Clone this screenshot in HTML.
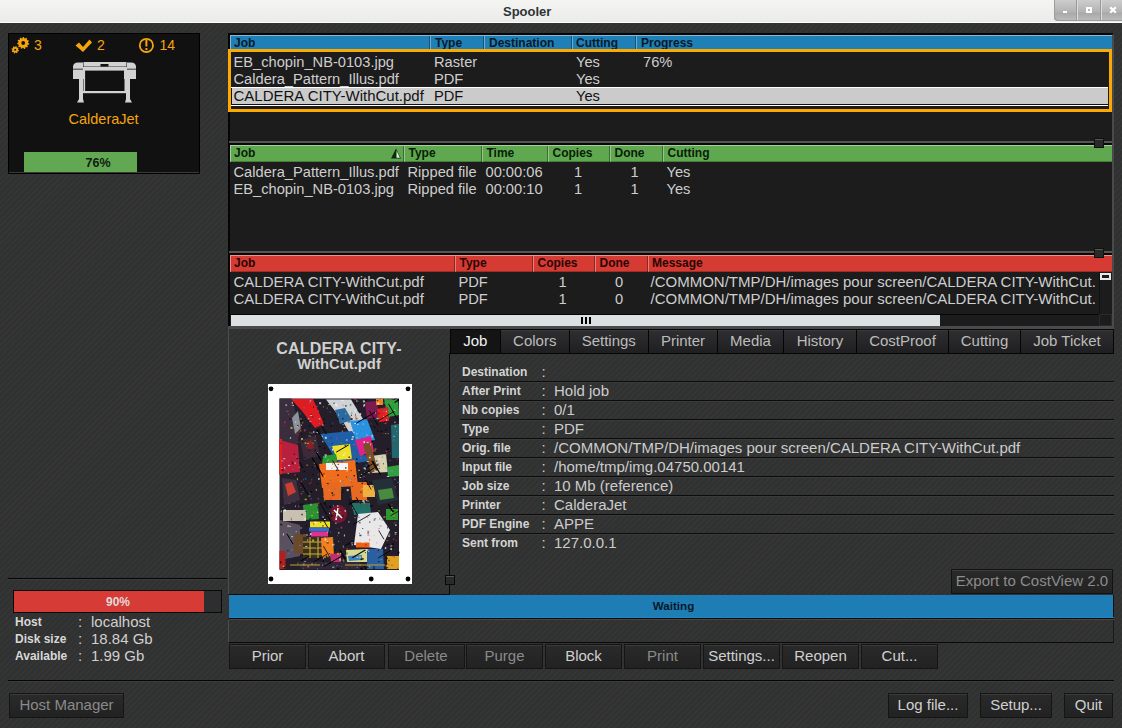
<!DOCTYPE html>
<html><head><meta charset="utf-8">
<style>
*{margin:0;padding:0;box-sizing:border-box}
html,body{width:1122px;height:728px;overflow:hidden}
body{position:relative;font-family:"Liberation Sans",sans-serif;font-size:15px;color:#cecece;
background:#323232;}
.a{position:absolute}
.t{position:absolute;white-space:nowrap;line-height:1}
.bg{background:repeating-linear-gradient(135deg,#353535 0px,#353535 1.6px,#303131 1.6px,#303131 4.2px)}
#title{left:0;top:0;width:1122px;height:23px;background:linear-gradient(#f4f4f3,#ebebea);border-bottom:1px solid #fdfdfd}
#wbtn{right:0;top:0;width:68px;height:20.5px;background:linear-gradient(#cdcdcd,#b4b4b4 55%,#a9a9a9 62%,#bdbdbd);border-bottom-left-radius:4px;box-shadow:inset 1px -1px #9c9c9c}
.hdr{position:absolute;height:17px;font-weight:bold;font-size:12px}
.hcol{position:absolute;top:0;height:17px;border-left:1px solid rgba(0,0,0,.35);box-shadow:inset 1px 0 rgba(255,255,255,.35);padding-left:4px;line-height:1}
.row{position:absolute;left:0;height:17px;white-space:nowrap}
.row span{position:absolute;top:0;line-height:1}
.btn{position:absolute;height:25px;border:1px solid #151515;background:linear-gradient(#2a2a2a,#222);box-shadow:inset 0 1px #3a3a3a;color:#d0d0d0;text-align:center;line-height:1}
.btn span{position:absolute;left:0;right:0;top:2.8px}
.dis{color:#8a8a8a}
.tab{position:absolute;top:0;height:24px;background:linear-gradient(#2e2e30,#1f1f21);color:#bdbdbd;text-align:center;border-right:2px solid #050505}
.tab span{position:absolute;left:0;right:0;top:6px;line-height:1}
.drow{position:absolute;left:460px;width:654px;height:19px}
.dl{position:absolute;left:2px;top:5px;font-weight:bold;font-size:12px;color:#d4d4d4;line-height:1}
.dc{position:absolute;left:82px;top:4px;line-height:1}
.dv{position:absolute;left:94px;top:4px;line-height:1}
.dline{position:absolute;left:460px;width:654px;height:2px;border-top:1px solid #0e0e0e;border-bottom:1px solid #3a3a3a}
</style></head><body>
<div class="a bg" style="left:0;top:23px;width:1122px;height:705px"></div>
<!-- title bar -->
<div id="title" class="a"><div class="t" style="left:503px;top:5px;font-weight:bold;font-size:13px;color:#2e3436">Spooler</div></div>
<div id="wbtn" class="a"></div>
<div class="a" style="left:1076px;top:0;width:1px;height:20px;background:#9a9a9a"></div><div class="a" style="left:1077px;top:0;width:1px;height:20px;background:#dcdcdc"></div>
<div class="a" style="left:1100px;top:0;width:1px;height:20px;background:#9a9a9a"></div><div class="a" style="left:1101px;top:0;width:1px;height:20px;background:#dcdcdc"></div>
<div class="a" style="left:1063px;top:11.2px;width:4px;height:2.2px;background:#fff"></div>
<div class="a" style="left:1086px;top:7px;width:6px;height:6px;border:2px solid #fff"></div>
<svg class="a" style="left:1109px;top:6px" width="8" height="8"><path d="M1.2 1.2 L6.8 6.8 M6.8 1.2 L1.2 6.8" stroke="#fff" stroke-width="2.2"/></svg>


<!-- printer box -->
<div class="a" style="left:8px;top:33px;width:192px;height:141px;background:#111;border:1px solid #000;box-shadow:inset 0 -1px #3a3a3a"></div>
<svg class="a" style="left:8px;top:33px" width="192" height="141" viewBox="8 33 192 141">
 <path fill="#f5a50c" fill-rule="evenodd" d="M28.10 43.00 L29.18 43.51 L28.96 44.69 L27.77 44.78 L27.32 45.65 L27.95 46.66 L27.13 47.53 L26.08 46.96 L25.24 47.46 L25.22 48.65 L24.05 48.94 L23.48 47.89 L22.50 47.85 L21.84 48.84 L20.71 48.46 L20.79 47.27 L19.99 46.70 L18.90 47.18 L18.15 46.24 L18.87 45.29 L18.50 44.38 L17.32 44.19 L17.20 43.00 L18.32 42.58 L18.50 41.62 L17.61 40.82 L18.15 39.76 L19.32 40.01 L19.99 39.30 L19.67 38.15 L20.71 37.54 L21.55 38.38 L22.50 38.15 L22.86 37.01 L24.05 37.06 L24.31 38.23 L25.24 38.54 L26.15 37.78 L27.13 38.47 L26.71 39.59 L27.32 40.35 L28.51 40.20 L28.96 41.31 L28.00 42.03 Z M25.10 43.00 A1.9 1.9 0 1 0 21.30 43.00 A1.9 1.9 0 1 0 25.10 43.00 Z"/>
 <path fill="#f5a50c" fill-rule="evenodd" d="M18.10 49.80 L18.97 50.25 L18.71 51.25 L17.73 51.22 L17.25 51.85 L17.55 52.78 L16.65 53.31 L15.99 52.59 L15.20 52.70 L14.75 53.57 L13.75 53.31 L13.78 52.33 L13.15 51.85 L12.22 52.15 L11.69 51.25 L12.41 50.59 L12.30 49.80 L11.43 49.35 L11.69 48.35 L12.67 48.38 L13.15 47.75 L12.85 46.82 L13.75 46.29 L14.41 47.01 L15.20 46.90 L15.65 46.03 L16.65 46.29 L16.62 47.27 L17.25 47.75 L18.18 47.45 L18.71 48.35 L17.99 49.01 Z M16.20 49.80 A1.0 1.0 0 1 0 14.20 49.80 A1.0 1.0 0 1 0 16.20 49.80 Z"/>
 <path d="M75.5 45.5 L79 42.5 L83 47 L89.5 39.5 L92 42.5 L83 52 Z" fill="#f5a50c"/>
 <circle cx="146.4" cy="45.4" r="6.6" fill="none" stroke="#f5a50c" stroke-width="1.8"/>
 <rect x="145.4" y="40" width="2" height="6.5" fill="#f5a50c"/>
 <rect x="145.4" y="48" width="2" height="2" fill="#f5a50c"/>
 <!-- printer -->
 <g fill="#d2d2d2">
  <path d="M73 79 L73 67 Q73 62.5 78 62.5 L83 62.5 L83 69 L85 70.5 L85 79 Z"/>
  <path d="M136 79 L136 67 Q136 62.5 131 62.5 L127 62.5 L127 69 L124 70.5 L124 79 Z"/>
  <rect x="83.5" y="62" width="43" height="4.6"/>
  <rect x="83" y="67" width="44" height="3.6"/>
  <rect x="83.5" y="70" width="1.6" height="22"/>
  <rect x="124.5" y="70" width="1.6" height="22"/>
  <rect x="83" y="91" width="44" height="2.2"/>
  <path d="M79 79 L83 79 L83 99 L84 102.5 L77 102.5 L79 99 Z"/>
  <path d="M126 79 L130 79 L130 99 L132 102.5 L125 102.5 L126 99 Z"/>
 </g>
 <rect x="100.5" y="64" width="8" height="2.6" fill="#111"/>
 <rect x="73" y="68.6" width="10" height="1.2" fill="#555"/>
 <rect x="127" y="68.6" width="9" height="1.2" fill="#555"/>
</svg>
<div class="t" style="left:34px;top:38px;font-size:14px;color:#f5a50c">3</div>
<div class="t" style="left:97px;top:38px;font-size:14px;color:#f5a50c">2</div>
<div class="t" style="left:159.5px;top:38px;font-size:14px;color:#f5a50c">14</div>
<div class="t" style="left:68.5px;top:112px;font-size:14.5px;color:#f5a50c">CalderaJet</div>
<div class="a" style="left:24px;top:152px;width:113px;height:20px;background:#62a852"></div>
<div class="t" style="left:85.5px;top:156.5px;font-size:12.5px;font-weight:bold;color:#102010">76%</div>

<!-- tables frame -->
<div class="a" style="left:228px;top:33px;width:886px;height:293px;background:#1c1c1c;border-left:2px solid #050505;border-top:2px solid #050505;border-right:2px solid #4a4a4a"></div>
<div class="a" style="left:229px;top:141px;width:883px;height:2px;background:#555"></div>
<div class="a" style="left:230px;top:143px;width:882px;height:2px;background:#080808"></div>
<div class="a" style="left:229px;top:251px;width:883px;height:2px;background:#555"></div>
<div class="a" style="left:230px;top:253px;width:882px;height:2px;background:#080808"></div>
<div class="a" style="left:230px;top:35px;width:882px;height:17px;background:#1f80b8;box-shadow:inset 1px 1px rgba(255,255,255,.45), inset 0 -1px rgba(0,0,0,.25)"></div>
<div class="t" style="left:234px;top:36.6px;font-size:12px;font-weight:bold;color:#061a2a">Job</div>
<div class="a" style="left:429px;top:36px;width:1px;height:16px;background:rgba(0,0,0,.35)"></div><div class="a" style="left:430px;top:36px;width:1px;height:16px;background:rgba(255,255,255,.35)"></div>
<div class="t" style="left:435px;top:36.6px;font-size:12px;font-weight:bold;color:#061a2a">Type</div>
<div class="a" style="left:483px;top:36px;width:1px;height:16px;background:rgba(0,0,0,.35)"></div><div class="a" style="left:484px;top:36px;width:1px;height:16px;background:rgba(255,255,255,.35)"></div>
<div class="t" style="left:489px;top:36.6px;font-size:12px;font-weight:bold;color:#061a2a">Destination</div>
<div class="a" style="left:571px;top:36px;width:1px;height:16px;background:rgba(0,0,0,.35)"></div><div class="a" style="left:572px;top:36px;width:1px;height:16px;background:rgba(255,255,255,.35)"></div>
<div class="t" style="left:576px;top:36.6px;font-size:12px;font-weight:bold;color:#061a2a">Cutting</div>
<div class="a" style="left:635px;top:36px;width:1px;height:16px;background:rgba(0,0,0,.35)"></div><div class="a" style="left:636px;top:36px;width:1px;height:16px;background:rgba(255,255,255,.35)"></div>
<div class="t" style="left:641px;top:36.6px;font-size:12px;font-weight:bold;color:#061a2a">Progress</div>

<div class="a" style="left:231px;top:87px;width:877px;height:1px;background:#fff"></div>
<div class="a" style="left:231px;top:88px;width:877px;height:16px;background:#cbcbcb;border-left:1px solid #111"></div>
<div class="a" style="left:231px;top:104px;width:877px;height:1px;background:#111"></div>
<div class="a" style="left:231px;top:105px;width:877px;height:1px;background:#fff"></div>
<div class="a" style="left:228px;top:49px;width:884px;height:63px;border:3px solid #fca900;border-top-width:3px"></div>
<div class="t" style="left:233.5px;top:55.48px;font-size:14.67px;color:#cecece">EB_chopin_NB-0103.jpg</div>
<div class="t" style="left:434px;top:55.48px;font-size:14.67px;color:#cecece">Raster</div>
<div class="t" style="left:576px;top:55.48px;font-size:14.67px;color:#cecece">Yes</div>
<div class="t" style="left:643px;top:55.48px;font-size:14.67px;color:#cecece">76%</div>
<div class="t" style="left:233.5px;top:72.38px;font-size:14.67px;color:#cecece">Caldera_Pattern_Illus.pdf</div>
<div class="t" style="left:434px;top:72.38px;font-size:14.67px;color:#cecece">PDF</div>
<div class="t" style="left:576px;top:72.38px;font-size:14.67px;color:#cecece">Yes</div>
<div class="t" style="left:233.5px;top:87.98px;font-size:15px;color:#111">CALDERA CITY-WithCut.pdf</div>
<div class="t" style="left:434px;top:89.28px;font-size:14.67px;color:#111">PDF</div>
<div class="t" style="left:576px;top:89.28px;font-size:14.67px;color:#111">Yes</div>
<div class="a" style="left:230px;top:145px;width:882px;height:17px;background:#60a850;box-shadow:inset 1px 1px rgba(255,255,255,.45), inset 0 -1px rgba(0,0,0,.25)"></div>
<div class="t" style="left:234px;top:146.6px;font-size:12px;font-weight:bold;color:#082008">Job</div>
<div class="a" style="left:403px;top:146px;width:1px;height:16px;background:rgba(0,0,0,.35)"></div><div class="a" style="left:404px;top:146px;width:1px;height:16px;background:rgba(255,255,255,.35)"></div>
<div class="t" style="left:408.5px;top:146.6px;font-size:12px;font-weight:bold;color:#082008">Type</div>
<div class="a" style="left:481px;top:146px;width:1px;height:16px;background:rgba(0,0,0,.35)"></div><div class="a" style="left:482px;top:146px;width:1px;height:16px;background:rgba(255,255,255,.35)"></div>
<div class="t" style="left:486.5px;top:146.6px;font-size:12px;font-weight:bold;color:#082008">Time</div>
<div class="a" style="left:547px;top:146px;width:1px;height:16px;background:rgba(0,0,0,.35)"></div><div class="a" style="left:548px;top:146px;width:1px;height:16px;background:rgba(255,255,255,.35)"></div>
<div class="t" style="left:552.5px;top:146.6px;font-size:12px;font-weight:bold;color:#082008">Copies</div>
<div class="a" style="left:609px;top:146px;width:1px;height:16px;background:rgba(0,0,0,.35)"></div><div class="a" style="left:610px;top:146px;width:1px;height:16px;background:rgba(255,255,255,.35)"></div>
<div class="t" style="left:614.5px;top:146.6px;font-size:12px;font-weight:bold;color:#082008">Done</div>
<div class="a" style="left:662px;top:146px;width:1px;height:16px;background:rgba(0,0,0,.35)"></div><div class="a" style="left:663px;top:146px;width:1px;height:16px;background:rgba(255,255,255,.35)"></div>
<div class="t" style="left:667.5px;top:146.6px;font-size:12px;font-weight:bold;color:#082008">Cutting</div>
<svg class="a" style="left:390px;top:148px" width="12" height="11"><path d="M6 0.5 L11 10.5 L1 10.5 Z" fill="#0a2a0a"/><path d="M6.5 2.5 L10 9.8 L6.5 9.8Z" fill="#d8f0d0"/></svg>
<div class="t" style="left:233.5px;top:165.08px;font-size:14.67px;color:#cecece">Caldera_Pattern_Illus.pdf</div>
<div class="t" style="left:407.5px;top:165.08px;font-size:14.67px;color:#cecece">Ripped file</div>
<div class="t" style="left:485.5px;top:165.08px;font-size:14.67px;color:#cecece">00:00:06</div>
<div class="t" style="left:574px;top:165.08px;font-size:14.67px;color:#cecece">1</div>
<div class="t" style="left:630.5px;top:165.08px;font-size:14.67px;color:#cecece">1</div>
<div class="t" style="left:666.5px;top:165.08px;font-size:14.67px;color:#cecece">Yes</div>
<div class="t" style="left:233.5px;top:182.18px;font-size:14.67px;color:#cecece">EB_chopin_NB-0103.jpg</div>
<div class="t" style="left:407.5px;top:182.18px;font-size:14.67px;color:#cecece">Ripped file</div>
<div class="t" style="left:485.5px;top:182.18px;font-size:14.67px;color:#cecece">00:00:10</div>
<div class="t" style="left:574px;top:182.18px;font-size:14.67px;color:#cecece">1</div>
<div class="t" style="left:630.5px;top:182.18px;font-size:14.67px;color:#cecece">1</div>
<div class="t" style="left:666.5px;top:182.18px;font-size:14.67px;color:#cecece">Yes</div>
<div class="a" style="left:230px;top:255px;width:882px;height:17px;background:#d63b33;box-shadow:inset 1px 1px rgba(255,255,255,.45), inset 0 -1px rgba(0,0,0,.25)"></div>
<div class="t" style="left:234px;top:256.6px;font-size:12px;font-weight:bold;color:#2a0505">Job</div>
<div class="a" style="left:454px;top:256px;width:1px;height:16px;background:rgba(0,0,0,.35)"></div><div class="a" style="left:455px;top:256px;width:1px;height:16px;background:rgba(255,255,255,.35)"></div>
<div class="t" style="left:459.5px;top:256.6px;font-size:12px;font-weight:bold;color:#2a0505">Type</div>
<div class="a" style="left:532px;top:256px;width:1px;height:16px;background:rgba(0,0,0,.35)"></div><div class="a" style="left:533px;top:256px;width:1px;height:16px;background:rgba(255,255,255,.35)"></div>
<div class="t" style="left:537.5px;top:256.6px;font-size:12px;font-weight:bold;color:#2a0505">Copies</div>
<div class="a" style="left:594px;top:256px;width:1px;height:16px;background:rgba(0,0,0,.35)"></div><div class="a" style="left:595px;top:256px;width:1px;height:16px;background:rgba(255,255,255,.35)"></div>
<div class="t" style="left:599.5px;top:256.6px;font-size:12px;font-weight:bold;color:#2a0505">Done</div>
<div class="a" style="left:647px;top:256px;width:1px;height:16px;background:rgba(0,0,0,.35)"></div><div class="a" style="left:648px;top:256px;width:1px;height:16px;background:rgba(255,255,255,.35)"></div>
<div class="t" style="left:652px;top:256.6px;font-size:12px;font-weight:bold;color:#2a0505">Message</div>
<div class="t" style="left:233.5px;top:274.08px;font-size:15px;color:#cecece">CALDERA CITY-WithCut.pdf</div>
<div class="t" style="left:458.5px;top:275.38px;font-size:14.67px;color:#cecece">PDF</div>
<div class="t" style="left:558.5px;top:275.38px;font-size:14.67px;color:#cecece">1</div>
<div class="t" style="left:615px;top:275.38px;font-size:14.67px;color:#cecece">0</div>
<div class="t" style="left:650.5px;top:274.08px;font-size:15px;color:#cecece">/COMMON/TMP/DH/images pour screen/CALDERA CITY-WithCut.</div>
<div class="t" style="left:233.5px;top:290.78px;font-size:15px;color:#cecece">CALDERA CITY-WithCut.pdf</div>
<div class="t" style="left:458.5px;top:292.08px;font-size:14.67px;color:#cecece">PDF</div>
<div class="t" style="left:558.5px;top:292.08px;font-size:14.67px;color:#cecece">1</div>
<div class="t" style="left:615px;top:292.08px;font-size:14.67px;color:#cecece">0</div>
<div class="t" style="left:650.5px;top:290.78px;font-size:15px;color:#cecece">/COMMON/TMP/DH/images pour screen/CALDERA CITY-WithCut.</div>

<div class="a" style="left:1099px;top:272px;width:13px;height:42px;background:#1c1c1c;border-left:1px solid #111"></div>
<div class="a" style="left:1100px;top:273px;width:11px;height:7px;border:2px solid #e8e8e8;border-top-width:2px;background:#1c1c1c"></div>
<div class="a" style="left:230px;top:314px;width:870px;height:1px;background:#060606"></div>
<div class="a" style="left:231px;top:315px;width:709px;height:11px;background:#dde0e2"></div>
<div class="a" style="left:581px;top:317px;width:2px;height:7px;background:#000"></div>
<div class="a" style="left:585px;top:317px;width:2px;height:7px;background:#000"></div>
<div class="a" style="left:589px;top:317px;width:2px;height:7px;background:#000"></div>
<div class="a" style="left:1099px;top:314px;width:13px;height:12px;background:#1c1c1c;border:1px solid #2a2a2a"></div>
<div class="a" style="left:228px;top:326px;width:886px;height:3px;background:#4a4a4a"></div>
<div class="a" style="left:1094px;top:138px;width:10px;height:10px;background:#2a2a2a;border:1px solid #111;box-shadow:inset 0 1px #555"></div>
<div class="a" style="left:1094px;top:248px;width:10px;height:10px;background:#2a2a2a;border:1px solid #111;box-shadow:inset 0 1px #555"></div>

<!-- preview panel -->
<div class="a" style="left:228px;top:329px;width:222px;height:266px;border-left:1px solid #4c4c4c;border-bottom:1px solid #0a0a0a"></div>
<div class="t" style="left:228px;width:222px;text-align:center;top:340.5px;font-size:16px;font-weight:bold;color:#d0d0d0;letter-spacing:0.2px">CALDERA CITY-</div>
<div class="t" style="left:228px;width:222px;text-align:center;top:356.5px;font-size:14.8px;font-weight:bold;color:#d0d0d0">WithCut.pdf</div>
<div class="a" style="left:268px;top:384px;width:143.5px;height:200px;background:#fff"></div>
<svg class="a" style="left:268px;top:384px" width="144" height="200" viewBox="268 384 144 200">
 <g fill="#000">
 <circle cx="271" cy="388.8" r="2.4"/><circle cx="408" cy="388.8" r="2.4"/>
 <circle cx="271" cy="579" r="2.4"/><circle cx="371.2" cy="579" r="2.4"/><circle cx="408" cy="579" r="2.4"/>
 </g>
 <g>
 <defs><clipPath id="imgclip"><rect x="279.5" y="398.5" width="119.5" height="171.5"/></clipPath></defs><rect x="279.5" y="398.5" width="119.5" height="171.5" fill="#241e2a"/>
 <polygon points="279.5,398.5 292,398.5 300,430 292,470 279.5,475" fill="#3a2e3e"/>
 <polygon points="291,399 313,399 324,424 315,428 302,411" fill="#e01c22"/>
 <polygon points="292,418 298,411 301,428 295,434" fill="#8c939b"/>
 <polygon points="326,399.5 351,399.5 371,432 352,437 342,420" fill="#cfd2d6"/>
 <polygon points="335,410 345,408 352,420 340,424" fill="#2a6aa0"/>
 <polygon points="320,434 352,431 374,460 340,466" fill="#1f5fa8"/>
 <polygon points="350,421 367,419 375,440 357,444" fill="#2a92e2"/>
 <polygon points="355,440 371,436 374,452 360,456" fill="#e1218a"/>
 <polygon points="332,446 350,444 352,459 337,460" fill="#efe02a"/>
 <polygon points="323,456 336,454 338,463 322,465" fill="#2a9a30"/>
 <polygon points="319,464 355,460 358,486 322,488" fill="#f06d1e"/>
 <rect x="326" y="463" width="22" height="7" fill="#f4f4f4"/>
 <polygon points="279.5,440 298,445 300,472 279.5,474" fill="#b8203e"/>
 <rect x="279.5" y="439" width="2.5" height="35" fill="#e52020"/>
 <polygon points="384,399 398,400 399,415 388,417" fill="#2f9f3e"/>
 <polygon points="365,402 377,401 379,417 367,419" fill="#7d1a4f"/>
 <polygon points="377,409 388,407 389,421 379,422" fill="#e02020"/>
 <rect x="376" y="399" width="7" height="6" fill="#f08020"/>
 <polygon points="391,425 399,424 399,458 392,458" fill="#206870"/>
 <polygon points="371,456 386,454 388,472 372,473" fill="#d8d0b0"/>
 <polygon points="387,467 399,465 399,476 388,477" fill="#30a040"/>
 <polygon points="363,444 370,442 378,470 371,473" fill="#7a5028"/>
 <polygon points="300,440 316,436 320,456 304,460" fill="#3a2a3a"/>
 <polygon points="306,442 312,440 314,448 308,450" fill="#8a2020"/>
 <polygon points="322.5,482 341,482 341,500 324,500" fill="#e86a20"/>
 <polygon points="350,482 367,482 367,500 352,500" fill="#e86a20"/>
 <rect x="363" y="485" width="12" height="12" fill="#f0b040"/>
 <polygon points="303,505 318,503 319,519 304,520" fill="#2a9030"/>
 <ellipse cx="338.5" cy="514" rx="8.5" ry="9" fill="#7a1530"/>
 <path d="M334 510 L342 518 M338 508 L336 520" stroke="#fff" stroke-width="1.5"/>
 <polygon points="352,503 370,503 371,515 354,515" fill="#207068"/>
 <polygon points="386,509 398,509 398,520 386,520" fill="#2a9a30"/>
 <polygon points="358,514 378,512 390,530 381,549 354,545" fill="#e8e8ea"/>
 <rect x="310" y="521.5" width="20" height="6" fill="#f0e020"/>
 <rect x="309" y="527.5" width="20" height="4" fill="#3070d0"/>
 <rect x="311" y="531.5" width="17" height="5" fill="#e03090"/>
 <polygon points="280,520 300,525 300,556 280,560" fill="#5a5060"/>
 <polygon points="283,510 306,510 306,521 283,521" fill="#c8c0b0"/>
 <polygon points="294,534 306,534 306,554 294,554" fill="#6a4a2a"/>
 <rect x="303" y="537" width="29" height="21" fill="#3a3020"/>
 <path d="M303 542 H332 M303 548 H332 M303 554 H332 M310 537 V558 M318 537 V558 M325 537 V558" stroke="#d0b030" stroke-width="1"/>
 <polygon points="321,538 333,537 334,556 322,557" fill="#f08020"/>
 <polygon points="330,554 341,553 341,562 331,562" fill="#c03070"/>
 <rect x="356" y="542.5" width="13.5" height="5" fill="#f06010"/>
 <polygon points="346,550 367,549 367,562 347,562" fill="#d8d890"/>
 <polygon points="348,556 362,555 362,560 349,561" fill="#3a80c0"/>
 <polygon points="367,549 383,549 384,569 367,569" fill="#2a60a0"/>
 <polygon points="387,556 399,556 399,569 387,569" fill="#e0a020"/>
 <rect x="279.5" y="551" width="6" height="18" fill="#b02020"/>
 <rect x="300" y="562" width="60" height="7" fill="#302838"/>
 <g opacity="0.7"><rect x="332.9" y="493.7" width="2" height="2" fill="#6a4a2a"/><rect x="380.4" y="430.8" width="2" height="1" fill="#000"/><rect x="332.2" y="422.6" width="1" height="2" fill="#2060b0"/><rect x="356.7" y="503.1" width="1" height="1" fill="#6a4a2a"/><rect x="287.0" y="404.6" width="1" height="1" fill="#2060b0"/><rect x="318.0" y="499.0" width="1" height="1" fill="#777"/><rect x="338.5" y="511.1" width="2" height="1.5" fill="#2a9030"/><rect x="397.2" y="567.8" width="1" height="1.5" fill="#d02020"/><rect x="368.9" y="485.7" width="1" height="1" fill="#000"/><rect x="326.7" y="542.4" width="2" height="1" fill="#000"/><rect x="379.5" y="398.6" width="1" height="1" fill="#e03090"/><rect x="323.8" y="519.0" width="2" height="1" fill="#fff"/><rect x="371.4" y="444.4" width="1" height="1.5" fill="#d02020"/><rect x="281.3" y="468.2" width="1" height="1" fill="#fff"/><rect x="362.9" y="400.4" width="2" height="2" fill="#fff"/><rect x="360.0" y="430.5" width="1" height="1" fill="#2a9030"/><rect x="355.5" y="418.3" width="2" height="1" fill="#000"/><rect x="311.3" y="563.6" width="1.5" height="1" fill="#fff"/><rect x="301.6" y="567.8" width="1" height="1" fill="#000"/><rect x="304.7" y="442.4" width="1.5" height="1.5" fill="#f0e020"/><rect x="288.2" y="413.8" width="1" height="1" fill="#f07020"/><rect x="323.4" y="475.5" width="2" height="1" fill="#f0e020"/><rect x="301.1" y="424.7" width="1" height="1" fill="#fff"/><rect x="298.2" y="505.4" width="1" height="2" fill="#e03090"/><rect x="350.7" y="470.1" width="1" height="1" fill="#000"/><rect x="340.0" y="441.9" width="2" height="1.5" fill="#2a9030"/><rect x="376.7" y="499.9" width="1.5" height="1" fill="#000"/><rect x="294.4" y="480.0" width="1" height="1.5" fill="#fff"/><rect x="387.7" y="433.2" width="1" height="1" fill="#bbb"/><rect x="328.0" y="440.8" width="1" height="1" fill="#777"/><rect x="323.0" y="495.8" width="1" height="1" fill="#f07020"/><rect x="295.8" y="475.1" width="1.5" height="1" fill="#000"/><rect x="388.5" y="479.2" width="1.5" height="1.5" fill="#000"/><rect x="282.0" y="506.7" width="2" height="1" fill="#777"/><rect x="317.1" y="568.4" width="1" height="2" fill="#20a0e0"/><rect x="322.9" y="406.1" width="1" height="1.5" fill="#f07020"/><rect x="289.5" y="479.0" width="1" height="2" fill="#000"/><rect x="381.4" y="495.9" width="2" height="2" fill="#000"/><rect x="351.3" y="412.1" width="1" height="1.5" fill="#2a9030"/><rect x="365.4" y="464.5" width="2" height="2" fill="#2060b0"/><rect x="378.4" y="412.7" width="1" height="1.5" fill="#000"/><rect x="336.3" y="437.6" width="1" height="2" fill="#e03090"/><rect x="309.7" y="400.4" width="1.5" height="1" fill="#fff"/><rect x="340.7" y="526.6" width="1.5" height="2" fill="#e03090"/><rect x="384.7" y="454.1" width="1.5" height="1" fill="#2a9030"/><rect x="374.3" y="526.8" width="1" height="1" fill="#f0e020"/><rect x="305.4" y="555.0" width="1" height="1" fill="#000"/><rect x="338.1" y="540.8" width="1" height="1" fill="#bbb"/><rect x="376.5" y="417.7" width="2" height="1.5" fill="#fff"/><rect x="377.5" y="463.5" width="2" height="1.5" fill="#2060b0"/><rect x="317.3" y="539.4" width="1.5" height="1" fill="#bbb"/><rect x="346.8" y="451.0" width="1" height="1" fill="#f0e020"/><rect x="333.2" y="402.7" width="1.5" height="1" fill="#000"/><rect x="373.5" y="565.8" width="1" height="2" fill="#000"/><rect x="353.8" y="509.9" width="1.5" height="1" fill="#fff"/><rect x="303.0" y="479.3" width="1" height="1" fill="#e03090"/><rect x="342.6" y="404.6" width="1" height="1.5" fill="#f07020"/><rect x="343.2" y="559.5" width="1" height="2" fill="#fff"/><rect x="289.8" y="557.0" width="2" height="1" fill="#2060b0"/><rect x="333.0" y="504.8" width="1" height="2" fill="#20a0e0"/><rect x="346.6" y="548.0" width="1.5" height="2" fill="#d02020"/><rect x="356.4" y="433.3" width="1" height="1" fill="#fff"/><rect x="385.7" y="565.2" width="1.5" height="1.5" fill="#bbb"/><rect x="386.9" y="544.0" width="1.5" height="1" fill="#000"/><rect x="331.5" y="492.1" width="1.5" height="2" fill="#000"/><rect x="305.3" y="546.0" width="2" height="1" fill="#fff"/><rect x="342.4" y="515.2" width="1" height="2" fill="#000"/><rect x="397.5" y="551.6" width="2" height="2" fill="#000"/><rect x="368.9" y="473.2" width="1.5" height="1" fill="#6a4a2a"/><rect x="340.2" y="552.7" width="1.5" height="1.5" fill="#f0e020"/><rect x="392.2" y="546.4" width="1" height="1.5" fill="#000"/><rect x="393.8" y="487.6" width="2" height="1" fill="#2a9030"/><rect x="342.7" y="484.0" width="2" height="1" fill="#20a0e0"/><rect x="393.9" y="486.2" width="2" height="1" fill="#e03090"/><rect x="290.5" y="426.9" width="2" height="2" fill="#f0e020"/><rect x="311.3" y="478.9" width="1" height="1.5" fill="#2a9030"/><rect x="385.8" y="557.6" width="2" height="1.5" fill="#000"/><rect x="302.1" y="503.5" width="1.5" height="1" fill="#000"/><rect x="283.7" y="424.9" width="1" height="1.5" fill="#d02020"/><rect x="364.9" y="440.1" width="2" height="1" fill="#e03090"/><rect x="365.7" y="419.4" width="1.5" height="1" fill="#6a4a2a"/><rect x="383.2" y="402.5" width="2" height="1" fill="#20a0e0"/><rect x="303.6" y="505.8" width="1" height="1" fill="#20a0e0"/><rect x="351.7" y="544.1" width="1" height="1.5" fill="#fff"/><rect x="316.8" y="452.0" width="1" height="1" fill="#fff"/><rect x="384.2" y="421.3" width="1" height="1" fill="#000"/><rect x="310.1" y="415.0" width="2" height="1" fill="#fff"/><rect x="327.0" y="515.0" width="1" height="1" fill="#fff"/><rect x="346.7" y="459.3" width="1.5" height="1" fill="#6a4a2a"/><rect x="354.4" y="456.9" width="1" height="1" fill="#e03090"/><rect x="292.0" y="404.9" width="2" height="1" fill="#fff"/><rect x="301.3" y="433.2" width="1" height="1.5" fill="#000"/><rect x="347.9" y="421.4" width="2" height="1" fill="#000"/><rect x="318.1" y="477.9" width="1.5" height="2" fill="#fff"/><rect x="350.4" y="400.8" width="1" height="1" fill="#fff"/><rect x="327.6" y="459.6" width="1.5" height="2" fill="#fff"/><rect x="350.9" y="414.6" width="1" height="1.5" fill="#000"/><rect x="374.1" y="518.3" width="2" height="1" fill="#6a4a2a"/><rect x="348.5" y="456.5" width="1.5" height="1.5" fill="#000"/><rect x="367.3" y="530.8" width="2" height="1" fill="#d02020"/><rect x="383.3" y="516.6" width="2" height="1" fill="#f0e020"/><rect x="303.9" y="429.9" width="1.5" height="1.5" fill="#e03090"/><rect x="291.4" y="549.5" width="1" height="1" fill="#bbb"/><rect x="391.0" y="511.7" width="1.5" height="1" fill="#f0e020"/><rect x="346.7" y="489.1" width="2" height="2" fill="#fff"/><rect x="362.2" y="528.0" width="1" height="1" fill="#000"/><rect x="366.7" y="442.1" width="2" height="1" fill="#fff"/><rect x="356.0" y="400.3" width="1.5" height="1.5" fill="#bbb"/><rect x="386.4" y="492.0" width="2" height="1" fill="#2060b0"/><rect x="375.0" y="411.5" width="1" height="2" fill="#fff"/><rect x="325.0" y="563.4" width="2" height="1" fill="#2a9030"/><rect x="391.0" y="470.0" width="2" height="1.5" fill="#f07020"/><rect x="342.1" y="480.7" width="1.5" height="1.5" fill="#777"/><rect x="282.7" y="529.8" width="1" height="1" fill="#2a9030"/><rect x="368.5" y="464.8" width="1.5" height="2" fill="#000"/><rect x="348.1" y="521.4" width="1.5" height="1" fill="#fff"/><rect x="330.2" y="479.7" width="1" height="1" fill="#6a4a2a"/><rect x="291.1" y="536.2" width="2" height="1" fill="#fff"/><rect x="350.7" y="418.1" width="2" height="2" fill="#000"/><rect x="303.5" y="407.3" width="1" height="1" fill="#f07020"/><rect x="331.8" y="512.0" width="2" height="1.5" fill="#2a9030"/><rect x="322.5" y="525.0" width="1" height="1.5" fill="#000"/><rect x="307.6" y="417.9" width="1.5" height="1.5" fill="#bbb"/><rect x="311.5" y="515.0" width="1" height="1.5" fill="#fff"/><rect x="301.9" y="440.8" width="1" height="1" fill="#000"/><rect x="280.6" y="442.6" width="1" height="1" fill="#000"/><rect x="305.8" y="445.8" width="1" height="1" fill="#20a0e0"/><rect x="307.2" y="565.4" width="2" height="2" fill="#f07020"/><rect x="304.4" y="456.9" width="1" height="1" fill="#000"/><rect x="332.3" y="538.2" width="1" height="2" fill="#2a9030"/><rect x="367.7" y="464.8" width="1" height="1.5" fill="#000"/><rect x="356.6" y="566.7" width="1.5" height="1.5" fill="#20a0e0"/><rect x="369.1" y="538.9" width="1" height="2" fill="#f07020"/><rect x="348.0" y="477.0" width="1.5" height="1" fill="#20a0e0"/><rect x="289.3" y="494.4" width="2" height="2" fill="#777"/><rect x="376.7" y="400.1" width="1.5" height="1" fill="#000"/><rect x="361.5" y="482.6" width="1.5" height="1.5" fill="#000"/><rect x="305.3" y="510.2" width="1.5" height="1.5" fill="#000"/><rect x="317.5" y="473.5" width="1.5" height="2" fill="#6a4a2a"/><rect x="374.3" y="450.3" width="1.5" height="1" fill="#f0e020"/><rect x="393.7" y="522.6" width="1" height="1" fill="#f07020"/><rect x="377.3" y="402.6" width="2" height="2" fill="#fff"/><rect x="366.7" y="461.1" width="2" height="1" fill="#fff"/><rect x="300.3" y="527.5" width="1.5" height="1" fill="#fff"/><rect x="340.3" y="491.0" width="1.5" height="1" fill="#2a9030"/><rect x="287.1" y="491.5" width="1" height="1.5" fill="#000"/><rect x="311.8" y="416.4" width="1.5" height="1" fill="#000"/><rect x="354.3" y="423.0" width="2" height="1" fill="#fff"/><rect x="337.2" y="552.8" width="1.5" height="2" fill="#f0e020"/><rect x="320.9" y="535.7" width="1.5" height="1" fill="#e03090"/><rect x="337.1" y="535.3" width="1" height="1" fill="#2a9030"/><rect x="368.8" y="566.1" width="1.5" height="1" fill="#f0e020"/><rect x="377.9" y="549.6" width="1" height="1.5" fill="#000"/><rect x="374.2" y="470.2" width="2" height="1" fill="#fff"/><rect x="367.0" y="567.0" width="2" height="1" fill="#d02020"/><rect x="303.6" y="470.7" width="1.5" height="1.5" fill="#000"/><rect x="335.1" y="522.7" width="1.5" height="1" fill="#fff"/><rect x="387.1" y="526.5" width="1" height="2" fill="#000"/><rect x="316.4" y="432.1" width="1.5" height="1" fill="#fff"/><rect x="350.3" y="478.7" width="1" height="2" fill="#fff"/><rect x="385.1" y="466.9" width="1.5" height="2" fill="#bbb"/><rect x="336.7" y="466.9" width="1.5" height="1" fill="#e03090"/><rect x="381.3" y="466.4" width="1" height="1" fill="#f0e020"/><rect x="394.7" y="533.6" width="1.5" height="1" fill="#fff"/><rect x="384.8" y="547.1" width="1.5" height="2" fill="#fff"/><rect x="363.7" y="501.5" width="1" height="2" fill="#fff"/><rect x="370.6" y="423.1" width="1" height="1.5" fill="#6a4a2a"/><rect x="342.6" y="424.1" width="1" height="1" fill="#fff"/><rect x="376.4" y="542.4" width="1" height="1" fill="#f07020"/><rect x="311.4" y="520.3" width="1" height="2" fill="#2060b0"/><rect x="289.3" y="525.8" width="1.5" height="1" fill="#fff"/><rect x="328.7" y="554.3" width="1" height="2" fill="#fff"/><rect x="283.9" y="468.7" width="2" height="1" fill="#777"/><rect x="316.8" y="467.4" width="1.5" height="2" fill="#000"/><rect x="321.9" y="515.3" width="1" height="2" fill="#2060b0"/><rect x="367.6" y="531.9" width="1" height="2" fill="#000"/><rect x="381.4" y="519.5" width="2" height="1" fill="#777"/><rect x="346.1" y="476.4" width="1" height="1" fill="#000"/><rect x="313.8" y="462.4" width="1.5" height="1.5" fill="#f0e020"/><rect x="345.1" y="413.3" width="1" height="1" fill="#f0e020"/><rect x="365.8" y="454.5" width="1.5" height="2" fill="#d02020"/><rect x="332.2" y="463.5" width="1" height="1" fill="#000"/><rect x="295.0" y="505.7" width="1" height="1" fill="#fff"/><rect x="327.0" y="540.8" width="1" height="1" fill="#fff"/><rect x="283.3" y="566.4" width="2" height="2" fill="#000"/><rect x="319.8" y="538.5" width="1" height="1" fill="#000"/><rect x="376.4" y="464.1" width="1.5" height="2" fill="#000"/><rect x="365.3" y="502.7" width="1.5" height="1" fill="#6a4a2a"/><rect x="281.7" y="454.8" width="1.5" height="1.5" fill="#2060b0"/><rect x="292.0" y="462.7" width="1.5" height="1.5" fill="#000"/><rect x="351.6" y="425.4" width="1.5" height="1" fill="#f07020"/><rect x="351.7" y="485.8" width="1" height="1" fill="#000"/><rect x="353.5" y="432.1" width="1" height="1" fill="#fff"/><rect x="335.9" y="469.5" width="1.5" height="1.5" fill="#000"/><rect x="389.1" y="459.9" width="2" height="1" fill="#2060b0"/><rect x="394.4" y="421.6" width="1" height="1.5" fill="#fff"/><rect x="386.8" y="567.2" width="1.5" height="1" fill="#000"/><rect x="389.7" y="399.1" width="1.5" height="1" fill="#f07020"/><rect x="377.5" y="430.0" width="1" height="2" fill="#000"/><rect x="327.1" y="531.6" width="1" height="1.5" fill="#f0e020"/><rect x="352.1" y="507.4" width="1" height="1" fill="#fff"/><rect x="328.1" y="404.1" width="2" height="1" fill="#f0e020"/><rect x="300.0" y="486.9" width="1.5" height="1" fill="#d02020"/><rect x="285.8" y="531.8" width="1" height="2" fill="#e03090"/><rect x="350.3" y="478.4" width="2" height="2" fill="#777"/><rect x="336.8" y="567.6" width="2" height="2" fill="#000"/><rect x="346.3" y="552.4" width="1.5" height="2" fill="#2a9030"/><rect x="386.2" y="453.0" width="1" height="1.5" fill="#2a9030"/><rect x="365.9" y="500.1" width="1.5" height="1" fill="#fff"/><rect x="294.2" y="474.5" width="2" height="1" fill="#e03090"/><rect x="361.5" y="488.0" width="1" height="1.5" fill="#f0e020"/><rect x="390.4" y="548.1" width="1.5" height="2" fill="#fff"/><rect x="305.7" y="525.4" width="1" height="1" fill="#000"/><rect x="340.8" y="420.6" width="2" height="1" fill="#777"/><rect x="308.3" y="449.4" width="1.5" height="1" fill="#000"/><rect x="331.5" y="475.0" width="2" height="1" fill="#f07020"/><rect x="361.2" y="437.7" width="1.5" height="1" fill="#2060b0"/><rect x="385.5" y="450.8" width="2" height="1" fill="#e03090"/><rect x="383.2" y="433.0" width="1" height="1" fill="#d02020"/><rect x="378.4" y="458.7" width="2" height="1" fill="#fff"/><rect x="354.5" y="517.1" width="1" height="1" fill="#fff"/><rect x="391.5" y="564.5" width="1" height="1.5" fill="#d02020"/><rect x="392.9" y="445.1" width="2" height="1" fill="#d02020"/><rect x="361.6" y="557.9" width="2" height="2" fill="#000"/><rect x="299.5" y="545.0" width="1" height="1" fill="#bbb"/><rect x="300.9" y="438.5" width="1.5" height="1.5" fill="#f07020"/><rect x="374.3" y="487.6" width="1" height="1" fill="#777"/><rect x="385.2" y="429.2" width="1" height="1.5" fill="#000"/><rect x="355.0" y="413.8" width="1" height="2" fill="#6a4a2a"/><rect x="288.2" y="552.8" width="1" height="1.5" fill="#20a0e0"/><rect x="309.1" y="535.0" width="1" height="1" fill="#777"/><rect x="396.1" y="430.7" width="1" height="1.5" fill="#20a0e0"/><rect x="282.9" y="532.9" width="1" height="1" fill="#2060b0"/><rect x="387.6" y="497.9" width="1" height="2" fill="#000"/><rect x="300.7" y="493.0" width="1.5" height="1.5" fill="#e03090"/><rect x="371.9" y="486.3" width="1" height="1" fill="#000"/><rect x="351.3" y="438.5" width="2" height="1.5" fill="#fff"/><rect x="310.1" y="491.0" width="2" height="1.5" fill="#000"/><rect x="303.4" y="563.5" width="1" height="2" fill="#fff"/><rect x="317.9" y="501.9" width="2" height="2" fill="#6a4a2a"/><rect x="331.6" y="443.2" width="1" height="1" fill="#000"/><rect x="386.6" y="495.2" width="1" height="1" fill="#000"/><rect x="316.2" y="405.7" width="1.5" height="1.5" fill="#e03090"/><rect x="289.9" y="538.0" width="1" height="2" fill="#bbb"/><rect x="308.8" y="483.0" width="2" height="1" fill="#d02020"/><rect x="328.0" y="460.5" width="1" height="1" fill="#000"/><rect x="337.3" y="527.9" width="1" height="1" fill="#2060b0"/><rect x="341.1" y="566.1" width="1" height="1" fill="#2a9030"/><rect x="384.5" y="422.6" width="2" height="1.5" fill="#e03090"/><rect x="329.6" y="411.5" width="1" height="1" fill="#777"/><rect x="309.4" y="492.3" width="1" height="2" fill="#2060b0"/><rect x="289.6" y="437.1" width="1.5" height="1.5" fill="#fff"/><rect x="284.2" y="467.0" width="1" height="1.5" fill="#fff"/><rect x="334.1" y="465.3" width="1" height="2" fill="#f0e020"/><rect x="371.7" y="435.1" width="1.5" height="1" fill="#fff"/><rect x="373.1" y="535.2" width="2" height="1" fill="#f0e020"/><rect x="304.8" y="478.0" width="1.5" height="2" fill="#2060b0"/><rect x="337.3" y="505.0" width="1" height="2" fill="#fff"/><rect x="343.3" y="469.8" width="1" height="1.5" fill="#f07020"/><rect x="391.4" y="504.1" width="1" height="1.5" fill="#6a4a2a"/><rect x="325.9" y="555.5" width="1" height="1.5" fill="#000"/><rect x="322.1" y="424.6" width="1.5" height="1" fill="#fff"/><rect x="364.9" y="552.7" width="1" height="1.5" fill="#f0e020"/><rect x="332.6" y="543.8" width="2" height="1.5" fill="#bbb"/><rect x="370.4" y="486.8" width="1" height="1.5" fill="#f0e020"/><rect x="351.2" y="481.5" width="1" height="1" fill="#6a4a2a"/><rect x="349.8" y="403.9" width="1.5" height="2" fill="#2a9030"/><rect x="336.0" y="516.5" width="1.5" height="1.5" fill="#2060b0"/><rect x="358.1" y="423.5" width="1" height="1.5" fill="#20a0e0"/><rect x="363.6" y="467.4" width="2" height="1.5" fill="#fff"/><rect x="291.6" y="461.5" width="1" height="1" fill="#000"/><rect x="379.6" y="525.5" width="2" height="1" fill="#777"/><rect x="357.4" y="409.9" width="1" height="1.5" fill="#000"/><rect x="392.2" y="546.1" width="1" height="1.5" fill="#000"/><rect x="373.8" y="418.9" width="2" height="1" fill="#e03090"/><rect x="324.7" y="454.3" width="2" height="1.5" fill="#fff"/><rect x="298.2" y="466.9" width="2" height="1" fill="#f07020"/><rect x="358.0" y="439.3" width="1" height="1.5" fill="#2a9030"/><rect x="374.4" y="479.8" width="1.5" height="1.5" fill="#000"/><rect x="386.0" y="419.0" width="1" height="2" fill="#bbb"/><rect x="285.9" y="482.7" width="1.5" height="2" fill="#d02020"/><rect x="384.1" y="410.8" width="1" height="1.5" fill="#d02020"/><rect x="384.7" y="494.7" width="1.5" height="1" fill="#e03090"/><rect x="324.9" y="456.5" width="1.5" height="1" fill="#fff"/><rect x="370.5" y="505.1" width="2" height="2" fill="#000"/><rect x="312.1" y="539.5" width="2" height="2" fill="#f0e020"/><rect x="284.0" y="421.6" width="1.5" height="1.5" fill="#e03090"/><rect x="322.0" y="564.6" width="1" height="1" fill="#bbb"/><rect x="306.5" y="514.1" width="1" height="1" fill="#20a0e0"/><rect x="395.1" y="399.1" width="2" height="1" fill="#20a0e0"/><rect x="383.8" y="516.0" width="1.5" height="1.5" fill="#f07020"/><rect x="291.8" y="401.8" width="1" height="2" fill="#fff"/><rect x="393.2" y="538.6" width="1" height="1.5" fill="#e03090"/><rect x="374.5" y="448.4" width="2" height="1.5" fill="#f07020"/><rect x="367.9" y="489.3" width="1" height="1" fill="#f07020"/><rect x="317.8" y="428.7" width="1" height="1" fill="#000"/><rect x="376.0" y="549.1" width="1.5" height="1" fill="#2060b0"/><rect x="340.0" y="514.0" width="1" height="1" fill="#2a9030"/><rect x="382.1" y="407.6" width="1.5" height="2" fill="#6a4a2a"/><rect x="366.8" y="516.4" width="1.5" height="1.5" fill="#f07020"/><rect x="364.0" y="454.1" width="1.5" height="1" fill="#000"/><rect x="346.5" y="470.0" width="1" height="1.5" fill="#fff"/><rect x="294.3" y="462.6" width="1.5" height="1" fill="#fff"/><rect x="394.4" y="478.7" width="1" height="1.5" fill="#bbb"/><rect x="329.0" y="505.8" width="2" height="2" fill="#000"/><rect x="285.2" y="519.8" width="1" height="1" fill="#fff"/><rect x="313.3" y="522.8" width="1" height="2" fill="#d02020"/><rect x="386.3" y="540.1" width="2" height="1" fill="#f07020"/><rect x="287.5" y="473.1" width="1.5" height="1" fill="#f0e020"/><rect x="364.7" y="467.9" width="1" height="2" fill="#fff"/><rect x="343.9" y="534.5" width="1" height="2" fill="#fff"/><rect x="377.9" y="493.1" width="1.5" height="2" fill="#2a9030"/><rect x="293.7" y="453.5" width="1" height="1.5" fill="#000"/><rect x="311.8" y="466.5" width="1.5" height="1" fill="#000"/><rect x="336.4" y="460.7" width="1.5" height="1" fill="#000"/><rect x="287.1" y="550.2" width="1.5" height="1" fill="#000"/><rect x="301.0" y="480.7" width="1" height="2" fill="#e03090"/><rect x="283.3" y="458.2" width="2" height="1" fill="#fff"/><rect x="344.5" y="510.2" width="1.5" height="1.5" fill="#fff"/><rect x="390.3" y="545.5" width="2" height="1" fill="#fff"/><rect x="380.7" y="559.1" width="1" height="1" fill="#bbb"/><rect x="321.9" y="526.6" width="1.5" height="1" fill="#6a4a2a"/><rect x="334.5" y="549.2" width="1" height="1.5" fill="#000"/><rect x="370.0" y="443.5" width="1" height="2" fill="#f0e020"/><rect x="315.8" y="488.8" width="1" height="2" fill="#f0e020"/><rect x="378.6" y="468.0" width="1" height="1" fill="#000"/><rect x="306.3" y="464.5" width="1.5" height="1.5" fill="#f07020"/><rect x="353.5" y="475.0" width="1.5" height="1.5" fill="#000"/><rect x="386.3" y="453.2" width="1" height="1.5" fill="#d02020"/><rect x="304.7" y="429.1" width="1" height="1" fill="#20a0e0"/><rect x="315.4" y="433.5" width="1.5" height="1" fill="#000"/><rect x="296.4" y="458.1" width="2" height="1" fill="#000"/><rect x="326.7" y="407.4" width="1" height="1.5" fill="#20a0e0"/><rect x="378.6" y="528.0" width="1" height="1" fill="#d02020"/><rect x="287.3" y="498.6" width="1.5" height="2" fill="#e03090"/><rect x="393.1" y="435.8" width="2" height="1" fill="#bbb"/><rect x="287.8" y="464.8" width="1.5" height="1" fill="#f07020"/><rect x="341.5" y="400.2" width="2" height="1" fill="#fff"/><rect x="352.2" y="457.1" width="2" height="2" fill="#6a4a2a"/><rect x="393.9" y="555.7" width="1" height="2" fill="#2a9030"/><rect x="358.0" y="469.8" width="2" height="1" fill="#f0e020"/><rect x="350.4" y="495.9" width="1" height="2" fill="#2060b0"/><rect x="313.0" y="406.3" width="1" height="1.5" fill="#000"/><rect x="342.9" y="454.3" width="1.5" height="1.5" fill="#fff"/><rect x="366.4" y="566.7" width="2" height="1" fill="#000"/><rect x="368.3" y="551.0" width="1" height="1" fill="#fff"/><rect x="378.6" y="508.9" width="1" height="1" fill="#000"/><rect x="339.9" y="567.4" width="1" height="1" fill="#000"/><rect x="363.5" y="441.1" width="1.5" height="2" fill="#fff"/><rect x="342.8" y="545.6" width="1" height="2" fill="#bbb"/><rect x="393.0" y="439.1" width="1" height="2" fill="#e03090"/><rect x="383.0" y="410.8" width="2" height="1" fill="#20a0e0"/><rect x="394.3" y="409.7" width="1" height="1.5" fill="#fff"/><rect x="291.3" y="404.8" width="1.5" height="1" fill="#777"/><rect x="293.4" y="429.4" width="2" height="1" fill="#2060b0"/><rect x="385.9" y="410.7" width="1" height="1.5" fill="#fff"/><rect x="345.6" y="567.5" width="2" height="1" fill="#d02020"/><rect x="362.1" y="542.1" width="1.5" height="1" fill="#fff"/><rect x="300.8" y="420.3" width="2" height="1" fill="#000"/><rect x="312.3" y="442.5" width="1.5" height="1.5" fill="#777"/><rect x="302.6" y="567.6" width="1" height="1.5" fill="#777"/><rect x="370.3" y="432.5" width="1" height="1.5" fill="#2a9030"/><rect x="323.7" y="502.7" width="1.5" height="2" fill="#000"/><rect x="339.3" y="558.6" width="1.5" height="2" fill="#fff"/><rect x="337.6" y="418.5" width="1" height="1.5" fill="#000"/><rect x="359.3" y="475.8" width="2" height="2" fill="#fff"/><rect x="367.2" y="500.7" width="2" height="1" fill="#f07020"/><rect x="329.0" y="446.3" width="2" height="1.5" fill="#777"/><rect x="357.6" y="400.7" width="1" height="1" fill="#2a9030"/><rect x="323.7" y="499.4" width="1.5" height="2" fill="#2a9030"/><rect x="312.3" y="415.9" width="1" height="1" fill="#2060b0"/><rect x="385.3" y="413.5" width="1.5" height="1" fill="#f07020"/><rect x="283.1" y="498.8" width="1.5" height="1" fill="#000"/><rect x="334.9" y="460.0" width="2" height="1.5" fill="#e03090"/><rect x="358.7" y="501.4" width="1" height="1" fill="#f0e020"/><rect x="330.6" y="437.6" width="1" height="1" fill="#000"/><rect x="397.5" y="510.1" width="1" height="1" fill="#e03090"/><rect x="323.1" y="422.8" width="2" height="1" fill="#000"/><rect x="279.9" y="561.4" width="1.5" height="2" fill="#000"/><rect x="330.6" y="425.0" width="1.5" height="1.5" fill="#000"/><rect x="292.3" y="468.7" width="1" height="1" fill="#777"/><rect x="397.4" y="494.4" width="1" height="1" fill="#000"/><rect x="357.7" y="485.2" width="1.5" height="1.5" fill="#f07020"/><rect x="371.2" y="440.5" width="2" height="2" fill="#000"/><rect x="396.3" y="498.6" width="1" height="1" fill="#2060b0"/><rect x="295.7" y="551.3" width="1" height="1" fill="#6a4a2a"/><rect x="300.0" y="503.6" width="1" height="2" fill="#000"/><rect x="306.5" y="534.0" width="1" height="2" fill="#fff"/><rect x="314.2" y="503.7" width="2" height="1" fill="#e03090"/><rect x="315.0" y="562.8" width="1" height="2" fill="#2a9030"/><rect x="314.8" y="435.0" width="1" height="2" fill="#d02020"/><rect x="385.2" y="433.1" width="1" height="1" fill="#f0e020"/><rect x="353.3" y="444.0" width="1.5" height="1" fill="#f07020"/><rect x="289.5" y="533.1" width="2" height="1.5" fill="#2a9030"/><rect x="318.9" y="418.4" width="1.5" height="1" fill="#fff"/><rect x="341.8" y="491.6" width="2" height="1" fill="#000"/><rect x="363.6" y="404.0" width="1.5" height="2" fill="#fff"/><rect x="340.8" y="488.1" width="1" height="1.5" fill="#2a9030"/><rect x="349.5" y="416.3" width="1.5" height="1" fill="#f07020"/><rect x="393.2" y="516.4" width="1.5" height="1" fill="#000"/><rect x="316.7" y="483.1" width="1.5" height="1" fill="#000"/><rect x="304.7" y="498.7" width="2" height="1.5" fill="#f0e020"/><rect x="290.1" y="495.8" width="1" height="1" fill="#f0e020"/><rect x="395.6" y="539.9" width="1.5" height="1" fill="#d02020"/><rect x="297.1" y="425.0" width="1.5" height="1.5" fill="#000"/><rect x="397.5" y="481.9" width="2" height="1" fill="#20a0e0"/><rect x="295.8" y="456.3" width="1" height="1" fill="#20a0e0"/><rect x="280.2" y="523.8" width="2" height="1.5" fill="#000"/><rect x="299.9" y="412.7" width="1" height="2" fill="#2060b0"/><rect x="359.4" y="534.7" width="2" height="1.5" fill="#000"/><rect x="378.1" y="561.1" width="1.5" height="1" fill="#000"/><rect x="326.4" y="516.0" width="1" height="1" fill="#000"/><rect x="328.4" y="489.7" width="1" height="1" fill="#bbb"/><rect x="335.2" y="403.8" width="2" height="2" fill="#fff"/><rect x="359.1" y="556.3" width="2" height="2" fill="#f0e020"/><rect x="339.9" y="480.4" width="1" height="1.5" fill="#fff"/><rect x="281.2" y="538.5" width="1.5" height="2" fill="#6a4a2a"/><rect x="360.2" y="475.5" width="2" height="1.5" fill="#000"/><rect x="336.2" y="565.2" width="1.5" height="1" fill="#e03090"/><rect x="307.1" y="442.9" width="2" height="1" fill="#bbb"/><rect x="388.3" y="535.0" width="1.5" height="2" fill="#fff"/><rect x="364.0" y="472.1" width="1" height="1" fill="#2a9030"/><rect x="386.8" y="476.0" width="2" height="1" fill="#fff"/><rect x="301.5" y="503.9" width="1.5" height="1" fill="#000"/><rect x="396.7" y="458.3" width="1" height="2" fill="#d02020"/><rect x="337.3" y="474.4" width="1.5" height="1.5" fill="#000"/><rect x="308.7" y="425.1" width="1" height="1.5" fill="#000"/><rect x="298.7" y="430.8" width="1" height="1.5" fill="#d02020"/><rect x="322.5" y="560.2" width="1.5" height="1.5" fill="#000"/><rect x="308.9" y="402.0" width="1.5" height="1.5" fill="#777"/><rect x="309.3" y="420.9" width="2" height="1" fill="#bbb"/><rect x="282.9" y="533.4" width="1" height="2" fill="#fff"/><rect x="376.5" y="491.1" width="1" height="1" fill="#20a0e0"/><rect x="373.9" y="426.2" width="1.5" height="1.5" fill="#000"/><rect x="329.9" y="531.1" width="1" height="2" fill="#2060b0"/><rect x="360.5" y="457.3" width="1" height="1.5" fill="#f07020"/><rect x="384.0" y="411.3" width="1" height="1" fill="#777"/><rect x="385.9" y="415.8" width="1" height="1" fill="#f07020"/><rect x="316.0" y="546.8" width="1" height="1" fill="#000"/><rect x="283.0" y="495.6" width="1" height="2" fill="#6a4a2a"/><rect x="359.7" y="413.1" width="1.5" height="2" fill="#fff"/><rect x="383.3" y="415.8" width="1" height="2" fill="#fff"/><rect x="288.8" y="481.3" width="1" height="1" fill="#777"/><rect x="309.7" y="435.8" width="1.5" height="1" fill="#20a0e0"/><rect x="391.6" y="555.8" width="2" height="1" fill="#e03090"/><rect x="373.4" y="567.9" width="1.5" height="1" fill="#000"/><rect x="370.3" y="425.2" width="1" height="1" fill="#000"/><rect x="314.7" y="449.6" width="1" height="2" fill="#000"/><rect x="297.1" y="430.2" width="1" height="1" fill="#f07020"/><rect x="287.5" y="533.5" width="2" height="1" fill="#2a9030"/><rect x="320.9" y="435.8" width="2" height="1" fill="#fff"/><rect x="310.4" y="498.1" width="1.5" height="1.5" fill="#2060b0"/><rect x="356.4" y="556.8" width="2" height="1" fill="#fff"/><rect x="297.2" y="441.6" width="2" height="1" fill="#d02020"/><rect x="301.3" y="513.8" width="1.5" height="1.5" fill="#000"/><rect x="301.3" y="438.0" width="1.5" height="1.5" fill="#fff"/><rect x="359.0" y="532.9" width="1" height="1" fill="#6a4a2a"/><rect x="308.3" y="435.5" width="2" height="1" fill="#f07020"/><rect x="358.5" y="410.4" width="1" height="2" fill="#000"/><rect x="329.0" y="512.5" width="1" height="1.5" fill="#fff"/><rect x="324.3" y="447.3" width="1" height="2" fill="#000"/><rect x="285.6" y="404.1" width="1" height="2" fill="#fff"/><rect x="296.4" y="433.4" width="2" height="1" fill="#d02020"/><rect x="319.8" y="556.7" width="1" height="1.5" fill="#000"/><rect x="302.2" y="421.6" width="1" height="2" fill="#f07020"/><rect x="323.4" y="418.9" width="1.5" height="1" fill="#000"/><rect x="395.6" y="521.8" width="1" height="1" fill="#777"/><rect x="317.4" y="497.5" width="1.5" height="2" fill="#6a4a2a"/><rect x="310.4" y="414.2" width="1" height="1" fill="#000"/><rect x="388.3" y="564.3" width="1" height="1" fill="#d02020"/><rect x="354.8" y="416.3" width="2" height="2" fill="#f07020"/><rect x="350.7" y="542.3" width="2" height="1" fill="#fff"/><rect x="296.9" y="478.2" width="1" height="2" fill="#f0e020"/><rect x="343.6" y="446.4" width="1" height="1" fill="#f0e020"/><rect x="366.4" y="434.5" width="1" height="1" fill="#fff"/><rect x="329.5" y="562.0" width="1" height="2" fill="#000"/><rect x="301.0" y="401.1" width="1.5" height="1" fill="#d02020"/><rect x="310.2" y="503.7" width="1.5" height="2" fill="#bbb"/><rect x="353.1" y="452.4" width="1.5" height="1" fill="#2a9030"/><rect x="330.2" y="498.3" width="1.5" height="1.5" fill="#e03090"/><rect x="307.0" y="557.6" width="1" height="2" fill="#6a4a2a"/><rect x="345.7" y="554.8" width="1" height="1.5" fill="#fff"/><rect x="345.0" y="467.1" width="1.5" height="1.5" fill="#000"/><rect x="354.3" y="399.0" width="2" height="1" fill="#e03090"/><rect x="367.4" y="534.6" width="2" height="1" fill="#e03090"/><rect x="326.8" y="483.1" width="2" height="1" fill="#000"/><rect x="317.2" y="507.2" width="1" height="1" fill="#000"/><rect x="312.6" y="473.8" width="1" height="1.5" fill="#000"/><rect x="307.2" y="539.4" width="1" height="1.5" fill="#fff"/><rect x="386.0" y="484.2" width="2" height="1.5" fill="#20a0e0"/><rect x="286.4" y="410.8" width="2" height="1" fill="#777"/><rect x="316.8" y="511.7" width="1.5" height="1" fill="#fff"/><rect x="360.9" y="474.3" width="1.5" height="1" fill="#fff"/><rect x="373.6" y="519.5" width="1.5" height="1" fill="#000"/><rect x="375.6" y="450.1" width="1" height="1" fill="#000"/><rect x="392.3" y="510.3" width="2" height="2" fill="#000"/><rect x="394.7" y="425.7" width="1.5" height="1.5" fill="#f0e020"/><rect x="316.2" y="430.1" width="1.5" height="1" fill="#000"/><rect x="331.0" y="467.8" width="2" height="1" fill="#bbb"/><rect x="390.8" y="507.2" width="2" height="1" fill="#f0e020"/><rect x="363.4" y="405.1" width="1" height="2" fill="#fff"/><rect x="306.7" y="503.6" width="1" height="1" fill="#6a4a2a"/><rect x="330.4" y="477.9" width="1" height="1" fill="#bbb"/><rect x="360.5" y="558.7" width="1.5" height="1.5" fill="#000"/><rect x="387.1" y="447.9" width="1.5" height="2" fill="#000"/><rect x="318.8" y="446.0" width="2" height="1" fill="#000"/><rect x="290.9" y="518.4" width="1" height="2" fill="#6a4a2a"/><rect x="309.0" y="432.4" width="1.5" height="1" fill="#2a9030"/><rect x="318.1" y="410.4" width="1" height="1.5" fill="#777"/><rect x="341.7" y="559.8" width="2" height="1" fill="#2a9030"/><rect x="388.1" y="532.7" width="1" height="1" fill="#2a9030"/><rect x="330.6" y="515.1" width="1.5" height="2" fill="#000"/><rect x="341.8" y="430.7" width="1" height="1" fill="#fff"/><rect x="344.6" y="444.8" width="1.5" height="1.5" fill="#000"/><rect x="362.8" y="476.1" width="2" height="1" fill="#e03090"/><rect x="302.4" y="441.4" width="1" height="1" fill="#000"/><rect x="311.3" y="516.6" width="2" height="1" fill="#2a9030"/><rect x="338.3" y="531.9" width="1" height="2" fill="#fff"/><rect x="359.9" y="503.2" width="1" height="1" fill="#000"/><rect x="308.4" y="495.5" width="2" height="1" fill="#f0e020"/><rect x="288.1" y="465.0" width="2" height="1" fill="#fff"/><rect x="392.0" y="543.4" width="2" height="1.5" fill="#000"/><rect x="319.1" y="402.2" width="2" height="2" fill="#fff"/><rect x="309.9" y="533.0" width="1.5" height="2" fill="#fff"/><rect x="322.7" y="472.8" width="2" height="2" fill="#d02020"/><rect x="304.4" y="402.5" width="1.5" height="1" fill="#2060b0"/><rect x="366.2" y="504.8" width="2" height="2" fill="#6a4a2a"/><rect x="394.7" y="532.1" width="2" height="1" fill="#fff"/><rect x="314.5" y="521.6" width="2" height="2" fill="#fff"/><rect x="356.6" y="436.9" width="1" height="1.5" fill="#f0e020"/><rect x="281.5" y="469.2" width="2" height="1.5" fill="#000"/><rect x="351.9" y="436.1" width="2" height="1.5" fill="#fff"/><rect x="367.7" y="472.2" width="2" height="1" fill="#fff"/><rect x="378.3" y="465.0" width="1.5" height="1.5" fill="#e03090"/><rect x="309.2" y="518.4" width="2" height="1" fill="#000"/><rect x="295.6" y="531.2" width="1.5" height="1" fill="#bbb"/><rect x="368.8" y="456.8" width="2" height="1.5" fill="#fff"/><rect x="388.4" y="533.4" width="2" height="2" fill="#777"/><rect x="386.4" y="562.9" width="1" height="1" fill="#000"/><rect x="333.8" y="488.6" width="2" height="1" fill="#777"/><rect x="321.1" y="527.5" width="1" height="1" fill="#777"/><rect x="343.9" y="427.1" width="1.5" height="1" fill="#f0e020"/><rect x="362.7" y="423.4" width="1" height="1.5" fill="#f0e020"/><rect x="357.1" y="423.8" width="1.5" height="1" fill="#fff"/><rect x="300.5" y="418.5" width="1" height="1" fill="#fff"/><rect x="310.7" y="481.6" width="1" height="1.5" fill="#d02020"/><rect x="304.4" y="518.1" width="1.5" height="1.5" fill="#fff"/><rect x="379.3" y="517.7" width="1" height="2" fill="#777"/><rect x="351.4" y="566.3" width="1" height="1" fill="#d02020"/><rect x="297.2" y="562.4" width="1.5" height="2" fill="#2a9030"/><rect x="300.2" y="429.5" width="1" height="2" fill="#f07020"/><rect x="350.8" y="457.7" width="1.5" height="1" fill="#e03090"/><rect x="322.5" y="437.4" width="1" height="1" fill="#20a0e0"/><rect x="390.5" y="402.7" width="1.5" height="1" fill="#f07020"/><rect x="369.4" y="482.1" width="2" height="1" fill="#000"/><rect x="328.8" y="553.0" width="1" height="1.5" fill="#000"/><rect x="358.2" y="516.7" width="1.5" height="1" fill="#2060b0"/><rect x="371.5" y="436.1" width="1" height="1.5" fill="#fff"/><rect x="322.0" y="440.8" width="1.5" height="1.5" fill="#bbb"/><rect x="281.3" y="460.4" width="2" height="1" fill="#bbb"/><rect x="299.9" y="426.1" width="1" height="2" fill="#6a4a2a"/><rect x="301.9" y="491.2" width="2" height="1" fill="#2a9030"/><rect x="375.9" y="460.1" width="1.5" height="2" fill="#2060b0"/><rect x="341.9" y="489.1" width="1" height="1.5" fill="#000"/><rect x="314.5" y="465.1" width="1" height="2" fill="#777"/><rect x="341.1" y="461.0" width="2" height="1.5" fill="#2060b0"/><rect x="290.2" y="483.7" width="1" height="1" fill="#000"/><rect x="292.4" y="489.3" width="1.5" height="2" fill="#6a4a2a"/><rect x="345.1" y="405.1" width="1.5" height="1.5" fill="#000"/><rect x="342.3" y="417.7" width="1" height="2" fill="#000"/><rect x="332.3" y="566.7" width="2" height="1" fill="#fff"/><rect x="287.6" y="525.1" width="1" height="2" fill="#fff"/><rect x="389.9" y="509.4" width="1.5" height="1" fill="#000"/><rect x="305.5" y="510.1" width="1" height="1" fill="#fff"/><rect x="369.4" y="455.3" width="1" height="1" fill="#bbb"/><rect x="301.7" y="533.9" width="1" height="1" fill="#000"/><rect x="320.1" y="521.9" width="1" height="1" fill="#000"/><rect x="366.8" y="549.2" width="1.5" height="1.5" fill="#fff"/><rect x="317.2" y="418.1" width="1" height="1" fill="#777"/><rect x="324.7" y="538.5" width="1.5" height="2" fill="#fff"/><rect x="328.5" y="509.8" width="1" height="1" fill="#bbb"/><rect x="311.4" y="432.5" width="1" height="1" fill="#bbb"/><rect x="301.5" y="438.8" width="1.5" height="1" fill="#f0e020"/><rect x="389.8" y="452.9" width="1" height="1" fill="#2a9030"/><rect x="337.6" y="463.8" width="1.5" height="1" fill="#000"/><rect x="282.8" y="565.6" width="1.5" height="1.5" fill="#f0e020"/><rect x="297.0" y="499.2" width="1" height="1" fill="#6a4a2a"/><rect x="280.8" y="510.4" width="1" height="2" fill="#fff"/><rect x="336.7" y="405.8" width="1" height="1" fill="#fff"/><rect x="324.8" y="436.8" width="2" height="2" fill="#fff"/><rect x="369.3" y="521.3" width="1" height="1.5" fill="#000"/><rect x="296.9" y="426.1" width="1" height="1" fill="#fff"/><rect x="383.0" y="463.3" width="1" height="1" fill="#000"/><rect x="379.4" y="500.8" width="1" height="1" fill="#fff"/><rect x="313.3" y="431.0" width="1" height="2" fill="#fff"/><rect x="288.2" y="487.3" width="1" height="1" fill="#20a0e0"/><rect x="372.9" y="468.2" width="2" height="1" fill="#f0e020"/><rect x="280.2" y="450.8" width="1" height="1" fill="#d02020"/><rect x="389.9" y="470.4" width="2" height="1.5" fill="#20a0e0"/><rect x="313.2" y="511.5" width="1" height="2" fill="#f07020"/><rect x="388.6" y="416.8" width="1" height="1.5" fill="#777"/><rect x="314.5" y="440.1" width="1" height="1" fill="#f0e020"/><rect x="381.6" y="456.6" width="1.5" height="1" fill="#20a0e0"/><rect x="395.1" y="524.4" width="1.5" height="1.5" fill="#fff"/><rect x="378.5" y="510.0" width="1" height="1.5" fill="#f0e020"/><rect x="338.1" y="413.8" width="1" height="2" fill="#bbb"/><rect x="304.1" y="560.9" width="2" height="1" fill="#bbb"/><rect x="332.3" y="544.2" width="1" height="1.5" fill="#fff"/><rect x="322.6" y="516.4" width="1" height="1.5" fill="#fff"/><rect x="324.4" y="501.8" width="1" height="1" fill="#000"/><rect x="360.6" y="505.1" width="1.5" height="2" fill="#6a4a2a"/><rect x="354.7" y="409.6" width="1" height="2" fill="#fff"/><rect x="364.8" y="544.1" width="2" height="1.5" fill="#d02020"/><rect x="345.8" y="439.5" width="2" height="1" fill="#fff"/><rect x="294.3" y="500.3" width="1" height="2" fill="#2a9030"/><rect x="379.2" y="491.2" width="1" height="1.5" fill="#000"/><rect x="323.1" y="557.2" width="1" height="2" fill="#bbb"/><rect x="360.2" y="491.6" width="1.5" height="1" fill="#000"/><rect x="355.2" y="402.9" width="1" height="1" fill="#000"/><rect x="348.7" y="543.5" width="1" height="1.5" fill="#000"/><rect x="290.5" y="517.6" width="1.5" height="1" fill="#f07020"/><rect x="358.7" y="522.3" width="2" height="1" fill="#000"/><rect x="359.4" y="564.2" width="1.5" height="2" fill="#777"/><rect x="354.2" y="478.1" width="1" height="2" fill="#e03090"/><rect x="380.1" y="480.5" width="1" height="1.5" fill="#000"/><rect x="343.1" y="459.6" width="1.5" height="1" fill="#777"/><rect x="288.2" y="501.9" width="2" height="1.5" fill="#f0e020"/><rect x="392.9" y="515.0" width="2" height="2" fill="#f07020"/><rect x="289.0" y="418.5" width="2" height="1" fill="#000"/><rect x="331.9" y="495.2" width="1" height="1" fill="#000"/><rect x="332.0" y="448.7" width="1.5" height="2" fill="#fff"/><rect x="365.5" y="399.1" width="1" height="2" fill="#000"/><rect x="295.1" y="421.6" width="1" height="1" fill="#fff"/><rect x="318.8" y="429.6" width="1" height="1.5" fill="#000"/><rect x="319.1" y="423.0" width="1" height="1" fill="#20a0e0"/><rect x="283.9" y="509.3" width="2" height="2" fill="#fff"/><rect x="377.3" y="553.4" width="1" height="2" fill="#e03090"/><rect x="315.0" y="554.4" width="1" height="1" fill="#2a9030"/><rect x="388.5" y="559.8" width="1" height="1.5" fill="#000"/><rect x="364.9" y="552.1" width="1" height="1" fill="#000"/><rect x="379.1" y="486.0" width="1.5" height="1" fill="#fff"/><rect x="344.6" y="452.5" width="1" height="1.5" fill="#fff"/><rect x="319.2" y="469.9" width="1" height="2" fill="#000"/><rect x="293.5" y="414.8" width="1" height="1" fill="#2a9030"/><rect x="338.1" y="508.1" width="1.5" height="1" fill="#f07020"/><rect x="288.6" y="436.8" width="1" height="1" fill="#000"/><rect x="362.4" y="500.1" width="2" height="2" fill="#fff"/><rect x="356.0" y="462.1" width="2" height="1.5" fill="#000"/><rect x="355.9" y="458.4" width="1.5" height="1.5" fill="#000"/><rect x="379.0" y="464.1" width="1" height="1.5" fill="#f0e020"/></g>
 <g clip-path="url(#imgclip)"><line x1="353.0" y1="524.6" x2="370.3" y2="514.4" stroke="#000" stroke-width="0.8"/><line x1="378.7" y1="530.4" x2="383.9" y2="539.3" stroke="#000" stroke-width="0.8"/><line x1="323.4" y1="546.1" x2="329.8" y2="557.1" stroke="#000" stroke-width="0.8"/><line x1="365.8" y1="467.9" x2="373.7" y2="463.2" stroke="#000" stroke-width="0.8"/><line x1="369.4" y1="410.7" x2="378.0" y2="425.3" stroke="#000" stroke-width="0.8"/><line x1="394.2" y1="399.4" x2="411.2" y2="389.4" stroke="#000" stroke-width="0.8"/><line x1="313.6" y1="562.0" x2="327.0" y2="554.1" stroke="#000" stroke-width="0.8"/><line x1="390.5" y1="515.9" x2="410.4" y2="504.2" stroke="#0c0c10" stroke-width="0.8"/><line x1="322.1" y1="426.7" x2="326.4" y2="434.0" stroke="#0c0c10" stroke-width="1.2"/><line x1="348.7" y1="499.8" x2="358.0" y2="515.7" stroke="#0c0c10" stroke-width="1"/><line x1="336.2" y1="452.2" x2="348.7" y2="444.9" stroke="#000" stroke-width="1"/><line x1="394.6" y1="402.4" x2="411.1" y2="392.6" stroke="#000" stroke-width="1.2"/><line x1="372.5" y1="460.8" x2="380.7" y2="474.7" stroke="#000" stroke-width="1.2"/><line x1="300.8" y1="560.9" x2="309.0" y2="556.1" stroke="#000" stroke-width="1"/><line x1="340.0" y1="550.3" x2="345.2" y2="559.2" stroke="#000" stroke-width="1.2"/><line x1="371.7" y1="460.9" x2="377.3" y2="470.6" stroke="#000" stroke-width="0.8"/><line x1="319.7" y1="502.3" x2="331.0" y2="521.5" stroke="#000" stroke-width="0.8"/><line x1="316.4" y1="452.4" x2="321.0" y2="460.2" stroke="#000" stroke-width="1.2"/><line x1="360.8" y1="567.9" x2="365.3" y2="575.5" stroke="#000" stroke-width="1.2"/><line x1="388.5" y1="403.9" x2="398.2" y2="420.3" stroke="#0c0c10" stroke-width="1"/><line x1="356.3" y1="423.3" x2="376.4" y2="411.4" stroke="#000" stroke-width="1"/><line x1="378.4" y1="420.7" x2="394.7" y2="411.1" stroke="#000" stroke-width="0.8"/><line x1="299.4" y1="461.9" x2="302.9" y2="467.9" stroke="#000" stroke-width="1"/><line x1="388.3" y1="504.0" x2="392.8" y2="511.7" stroke="#000" stroke-width="1.2"/><line x1="365.6" y1="479.9" x2="371.2" y2="489.5" stroke="#000" stroke-width="0.8"/><line x1="324.0" y1="566.5" x2="343.8" y2="554.9" stroke="#000" stroke-width="1"/><line x1="300.8" y1="482.1" x2="308.4" y2="495.1" stroke="#000" stroke-width="1"/><line x1="286.9" y1="533.7" x2="293.1" y2="544.2" stroke="#000" stroke-width="1"/><line x1="322.4" y1="518.3" x2="327.9" y2="527.7" stroke="#0c0c10" stroke-width="1"/><line x1="356.2" y1="497.2" x2="359.3" y2="502.5" stroke="#0c0c10" stroke-width="1"/><line x1="358.8" y1="477.2" x2="376.3" y2="466.8" stroke="#0c0c10" stroke-width="1"/><line x1="311.8" y1="457.2" x2="323.3" y2="476.7" stroke="#000" stroke-width="1.2"/><line x1="332.6" y1="460.4" x2="338.6" y2="470.6" stroke="#000" stroke-width="0.8"/><line x1="378.2" y1="557.9" x2="390.6" y2="550.6" stroke="#000" stroke-width="0.8"/><line x1="352.3" y1="557.7" x2="365.3" y2="550.0" stroke="#0c0c10" stroke-width="1.2"/><line x1="344.8" y1="545.9" x2="354.0" y2="540.5" stroke="#000" stroke-width="0.8"/><line x1="348.7" y1="504.6" x2="356.6" y2="500.0" stroke="#000" stroke-width="1.2"/><line x1="364.3" y1="566.2" x2="376.1" y2="586.3" stroke="#000" stroke-width="0.8"/><line x1="316.9" y1="429.4" x2="321.7" y2="437.4" stroke="#000" stroke-width="1"/><line x1="324.4" y1="502.5" x2="332.7" y2="516.6" stroke="#0c0c10" stroke-width="0.8"/></g>
 <path d="M345 565 H385 M290 565 H320" stroke="#c0a030" stroke-width="1"/>
 <polygon points="282,478 296,480 300,500 284,505" fill="#3e3040"/>
 <polygon points="285,484 292,482 296,492 288,496" fill="#c84030"/>
 <polygon points="372,480 392,478 398,500 378,505" fill="#23303a"/>
 <polygon points="378,490 392,488 394,498 380,500" fill="#4a8a40"/>
</g>
</svg>
<div class="a" style="left:445px;top:575px;width:10px;height:10px;background:#2a2a2a;border:1px solid #0a0a0a;box-shadow:inset 0 1px #555;z-index:2"></div>

<!-- tabs -->
<div class="a" style="left:449.5px;top:329px;width:664px;height:25px;background:#050505"></div>
<div class="a" style="left:449px;top:353px;width:1px;height:242px;background:#0a0a0a"></div>
<div class="a" style="left:450.5px;top:330px;width:49.5px;height:23px;background:#141414"></div><div class="t" style="left:450.5px;width:49.5px;text-align:center;top:332.5px;font-size:15px;color:#f2f2f2">Job</div>
<div class="a" style="left:501px;top:330px;width:67.5px;height:23px;background:linear-gradient(#2f2f31,#1f1f21);box-shadow:inset 0 1px #3a3a3c"></div><div class="t" style="left:501px;width:67.5px;text-align:center;top:332.5px;font-size:15px;color:#bcbcbc">Colors</div>
<div class="a" style="left:569.5px;top:330px;width:78.5px;height:23px;background:linear-gradient(#2f2f31,#1f1f21);box-shadow:inset 0 1px #3a3a3c"></div><div class="t" style="left:569.5px;width:78.5px;text-align:center;top:332.5px;font-size:15px;color:#bcbcbc">Settings</div>
<div class="a" style="left:649px;top:330px;width:68px;height:23px;background:linear-gradient(#2f2f31,#1f1f21);box-shadow:inset 0 1px #3a3a3c"></div><div class="t" style="left:649px;width:68px;text-align:center;top:332.5px;font-size:15px;color:#bcbcbc">Printer</div>
<div class="a" style="left:718px;top:330px;width:65px;height:23px;background:linear-gradient(#2f2f31,#1f1f21);box-shadow:inset 0 1px #3a3a3c"></div><div class="t" style="left:718px;width:65px;text-align:center;top:332.5px;font-size:15px;color:#bcbcbc">Media</div>
<div class="a" style="left:784px;top:330px;width:72px;height:23px;background:linear-gradient(#2f2f31,#1f1f21);box-shadow:inset 0 1px #3a3a3c"></div><div class="t" style="left:784px;width:72px;text-align:center;top:332.5px;font-size:15px;color:#bcbcbc">History</div>
<div class="a" style="left:857px;top:330px;width:91px;height:23px;background:linear-gradient(#2f2f31,#1f1f21);box-shadow:inset 0 1px #3a3a3c"></div><div class="t" style="left:857px;width:91px;text-align:center;top:332.5px;font-size:15px;color:#bcbcbc">CostProof</div>
<div class="a" style="left:949px;top:330px;width:71px;height:23px;background:linear-gradient(#2f2f31,#1f1f21);box-shadow:inset 0 1px #3a3a3c"></div><div class="t" style="left:949px;width:71px;text-align:center;top:332.5px;font-size:15px;color:#bcbcbc">Cutting</div>
<div class="a" style="left:1021px;top:330px;width:92px;height:23px;background:linear-gradient(#2f2f31,#1f1f21);box-shadow:inset 0 1px #3a3a3c"></div><div class="t" style="left:1021px;width:92px;text-align:center;top:332.5px;font-size:15px;color:#bcbcbc">Job Ticket</div>

<div class="t" style="left:462px;top:365.84px;font-size:12px;font-weight:bold;color:#d4d4d4">Destination</div><div class="t" style="left:541.5px;top:364.30px;font-size:15px;color:#cccccc">:</div><div class="a" style="left:460px;top:381px;width:654px;height:1px;background:#0c0c0c"></div><div class="a" style="left:460px;top:382px;width:654px;height:1px;background:#3a3a3a"></div>
<div class="t" style="left:462px;top:384.84px;font-size:12px;font-weight:bold;color:#d4d4d4">After Print</div><div class="t" style="left:541.5px;top:383.30px;font-size:15px;color:#cccccc">:</div><div class="t" style="left:554px;top:383.30px;font-size:15px;color:#cccccc">Hold job</div><div class="a" style="left:460px;top:400px;width:654px;height:1px;background:#0c0c0c"></div><div class="a" style="left:460px;top:401px;width:654px;height:1px;background:#3a3a3a"></div>
<div class="t" style="left:462px;top:403.84px;font-size:12px;font-weight:bold;color:#d4d4d4">Nb copies</div><div class="t" style="left:541.5px;top:402.30px;font-size:15px;color:#cccccc">:</div><div class="t" style="left:554px;top:402.30px;font-size:15px;color:#cccccc">0/1</div><div class="a" style="left:460px;top:419px;width:654px;height:1px;background:#0c0c0c"></div><div class="a" style="left:460px;top:420px;width:654px;height:1px;background:#3a3a3a"></div>
<div class="t" style="left:462px;top:422.84px;font-size:12px;font-weight:bold;color:#d4d4d4">Type</div><div class="t" style="left:541.5px;top:421.30px;font-size:15px;color:#cccccc">:</div><div class="t" style="left:554px;top:421.30px;font-size:15px;color:#cccccc">PDF</div><div class="a" style="left:460px;top:438px;width:654px;height:1px;background:#0c0c0c"></div><div class="a" style="left:460px;top:439px;width:654px;height:1px;background:#3a3a3a"></div>
<div class="t" style="left:462px;top:441.84px;font-size:12px;font-weight:bold;color:#d4d4d4">Orig. file</div><div class="t" style="left:541.5px;top:440.30px;font-size:15px;color:#cccccc">:</div><div class="t" style="left:554px;top:440.30px;font-size:15px;color:#cccccc">/COMMON/TMP/DH/images pour screen/CALDERA CITY-WithCut.pdf</div><div class="a" style="left:460px;top:457px;width:654px;height:1px;background:#0c0c0c"></div><div class="a" style="left:460px;top:458px;width:654px;height:1px;background:#3a3a3a"></div>
<div class="t" style="left:462px;top:460.84px;font-size:12px;font-weight:bold;color:#d4d4d4">Input file</div><div class="t" style="left:541.5px;top:459.30px;font-size:15px;color:#cccccc">:</div><div class="t" style="left:554px;top:459.30px;font-size:15px;color:#cccccc">/home/tmp/img.04750.00141</div><div class="a" style="left:460px;top:476px;width:654px;height:1px;background:#0c0c0c"></div><div class="a" style="left:460px;top:477px;width:654px;height:1px;background:#3a3a3a"></div>
<div class="t" style="left:462px;top:479.84px;font-size:12px;font-weight:bold;color:#d4d4d4">Job size</div><div class="t" style="left:541.5px;top:478.30px;font-size:15px;color:#cccccc">:</div><div class="t" style="left:554px;top:478.30px;font-size:15px;color:#cccccc">10 Mb (reference)</div><div class="a" style="left:460px;top:495px;width:654px;height:1px;background:#0c0c0c"></div><div class="a" style="left:460px;top:496px;width:654px;height:1px;background:#3a3a3a"></div>
<div class="t" style="left:462px;top:498.84px;font-size:12px;font-weight:bold;color:#d4d4d4">Printer</div><div class="t" style="left:541.5px;top:497.30px;font-size:15px;color:#cccccc">:</div><div class="t" style="left:554px;top:497.30px;font-size:15px;color:#cccccc">CalderaJet</div><div class="a" style="left:460px;top:514px;width:654px;height:1px;background:#0c0c0c"></div><div class="a" style="left:460px;top:515px;width:654px;height:1px;background:#3a3a3a"></div>
<div class="t" style="left:462px;top:517.84px;font-size:12px;font-weight:bold;color:#d4d4d4">PDF Engine</div><div class="t" style="left:541.5px;top:516.30px;font-size:15px;color:#cccccc">:</div><div class="t" style="left:554px;top:516.30px;font-size:15px;color:#cccccc">APPE</div><div class="a" style="left:460px;top:533px;width:654px;height:1px;background:#0c0c0c"></div><div class="a" style="left:460px;top:534px;width:654px;height:1px;background:#3a3a3a"></div>
<div class="t" style="left:462px;top:536.84px;font-size:12px;font-weight:bold;color:#d4d4d4">Sent from</div><div class="t" style="left:541.5px;top:535.30px;font-size:15px;color:#cccccc">:</div><div class="t" style="left:554px;top:535.30px;font-size:15px;color:#cccccc">127.0.0.1</div>

<div class="a" style="left:951px;top:569px;width:162px;height:25px;border:1px solid #121212;background:linear-gradient(#2a2a2a,#232323);box-shadow:inset 0 1px #3c3c3c"></div>
<div class="t" style="left:951px;width:162px;text-align:center;top:572.5px;font-size:15px;color:#8c8c8c">Export to CostView 2.0</div>

<!-- waiting & empty bars -->
<div class="a" style="left:229px;top:595px;width:885px;height:23px;background:#1e7db5;border-right:1px solid #111"></div>
<div class="a" style="left:229px;top:617px;width:885px;height:1px;background:#2288c4"></div><div class="a" style="left:229px;top:618px;width:885px;height:1px;background:#0a0a0a"></div><div class="a" style="left:229px;top:619px;width:885px;height:1px;background:#474747"></div>
<div class="t" style="left:231px;width:885px;text-align:center;top:600.4px;font-size:11.6px;font-weight:bold;color:#081828">Waiting</div>
<div class="a" style="left:228px;top:620px;width:886px;height:23px;border-left:1px solid #4c4c4c;border-bottom:1px solid #0a0a0a;border-right:1px solid #1a1a1a"></div>
<div class="btn" style="left:229px;top:644px;width:77px"><span>Prior</span></div>
<div class="btn" style="left:308px;top:644px;width:77px"><span>Abort</span></div>
<div class="btn" style="left:387.5px;top:644px;width:77px"><span class=dis>Delete</span></div>
<div class="btn" style="left:466px;top:644px;width:77px"><span class=dis>Purge</span></div>
<div class="btn" style="left:545px;top:644px;width:77px"><span>Block</span></div>
<div class="btn" style="left:624px;top:644px;width:77px"><span class=dis>Print</span></div>
<div class="btn" style="left:703px;top:644px;width:77px"><span>Settings...</span></div>
<div class="btn" style="left:782px;top:644px;width:77px"><span>Reopen</span></div>
<div class="btn" style="left:861px;top:644px;width:77px"><span>Cut...</span></div>

<div class="a" style="left:8px;top:680px;width:1106px;height:1px;background:#050505"></div>
<div class="a" style="left:8px;top:681px;width:1106px;height:1px;background:#3c3c3c"></div>

<!-- left disk panel -->
<div class="a" style="left:8px;top:578px;width:219px;height:1px;background:#050505"></div>
<div class="a" style="left:8px;top:579px;width:219px;height:1px;background:#3c3c3c"></div>
<div class="a" style="left:13px;top:590px;width:209px;height:23px;background:#2e2e30;border:1px solid #0a0a0a"></div>
<div class="a" style="left:14px;top:591px;width:190px;height:21px;background:#d63b35"></div>
<div class="t" style="left:106px;top:596px;font-size:12px;font-weight:bold;color:#e0d8d8">90%</div>
<div class="t" style="left:15px;top:616.2px;font-size:12px;font-weight:bold;color:#d8d8d8">Host</div>
<div class="t" style="left:15px;top:633.2px;font-size:12px;font-weight:bold;color:#d8d8d8">Disk size</div>
<div class="t" style="left:15px;top:650px;font-size:12px;font-weight:bold;color:#d8d8d8">Available</div>
<div class="t" style="left:78px;top:613.7px;font-size:15px;color:#d0d0d0">:</div>
<div class="t" style="left:78px;top:630.7px;font-size:15px;color:#d0d0d0">:</div>
<div class="t" style="left:78px;top:647.5px;font-size:15px;color:#d0d0d0">:</div>
<div class="t" style="left:91px;top:613.7px;font-size:15px;color:#d0d0d0">localhost</div>
<div class="t" style="left:91px;top:630.7px;font-size:15px;color:#d0d0d0">18.84 Gb</div>
<div class="t" style="left:91px;top:647.5px;font-size:15px;color:#d0d0d0">1.99 Gb</div>

<!-- bottom buttons -->
<div class="btn" style="left:9px;top:693px;width:115px"><span class="dis">Host Manager</span></div>
<div class="btn" style="left:888px;top:693px;width:80px"><span>Log file...</span></div>
<div class="btn" style="left:980px;top:693px;width:72px"><span>Setup...</span></div>
<div class="btn" style="left:1064px;top:693px;width:49px"><span>Quit</span></div>
</body></html>
